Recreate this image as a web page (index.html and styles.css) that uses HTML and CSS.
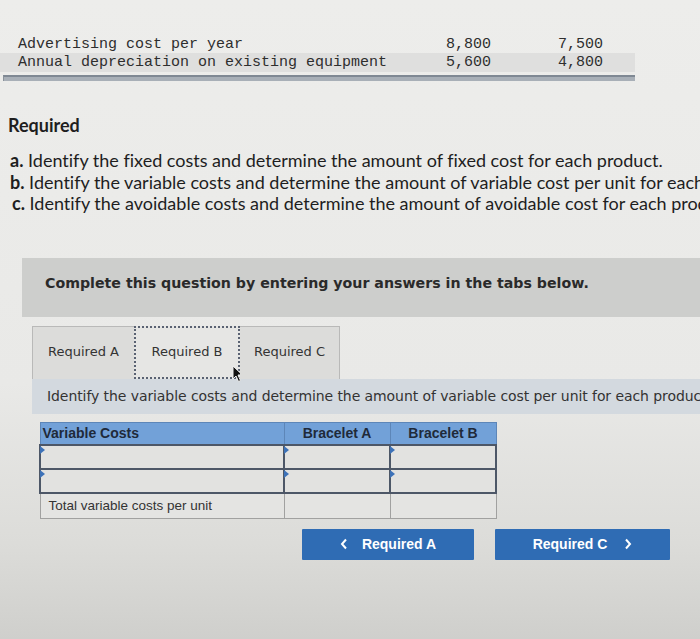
FILE: index.html
```html
<!DOCTYPE html>
<html>
<head>
<meta charset="utf-8">
<link rel="stylesheet" href="styles.css">
</head>
<body>
<div class="page">
  <div class="data">
    <div class="drow">
      <span class="dlabel">Advertising cost per year</span>
      <span class="dnum">8,800</span>
      <span class="dnum">7,500</span>
    </div>
    <div class="drow alt">
      <span class="dlabel">Annual depreciation on existing equipment</span>
      <span class="dnum">5,600</span>
      <span class="dnum">4,800</span>
    </div>
  </div>
  <div class="rule"></div>

  <h2 class="req-title">Required</h2>
  <ol class="req-list">
    <li><b>a.</b> Identify the fixed costs and determine the amount of fixed cost for each product.</li>
    <li><b>b.</b> Identify the variable costs and determine the amount of variable cost per unit for each product.</li>
    <li class="c"><b>c.</b> Identify the avoidable costs and determine the amount of avoidable cost for each product.</li>
  </ol>

  <div class="notice">Complete this question by entering your answers in the tabs below.</div>

  <div class="tabs">
    <div class="tab">Required A</div>
    <div class="tab active">Required B<svg class="cursor" width="12" height="18" viewBox="0 0 12 18"><path d="M1 1 L1 14 L4 11 L6.5 16.5 L8.5 15.5 L6 10 L10.5 10 Z" fill="#111" stroke="#eee" stroke-width="1"/></svg></div>
    <div class="tab">Required C</div>
  </div>
  <div class="panel">Identify the variable costs and determine the amount of variable cost per unit for each product.</div>

  <table class="grid">
    <thead>
      <tr><th class="first">Variable Costs</th><th>Bracelet A</th><th>Bracelet B</th></tr>
    </thead>
    <tbody>
      <tr class="input"><td><i class="flag"></i></td><td><i class="flag"></i></td><td><i class="flag"></i></td></tr>
      <tr class="input"><td><i class="flag"></i></td><td><i class="flag"></i></td><td><i class="flag"></i></td></tr>
      <tr class="total"><td>Total variable costs per unit</td><td></td><td></td></tr>
    </tbody>
  </table>

  <div class="nav">
    <div class="btn prev"><svg class="chev" width="8" height="12" viewBox="0 0 8 12"><path d="M6 1.5 L2 6 L6 10.5" fill="none" stroke="#fff" stroke-width="2"/></svg>Required A</div>
    <div class="btn next">Required C<svg class="chev" width="8" height="12" viewBox="0 0 8 12"><path d="M2 1.5 L6 6 L2 10.5" fill="none" stroke="#fff" stroke-width="2"/></svg></div>
  </div>
</div>
</body>
</html>
```

FILE: styles.css
```css
* { box-sizing: border-box; }
html, body { margin: 0; padding: 0; }
body {
  width: 700px;
  height: 639px;
  overflow: hidden;
  background: linear-gradient(to bottom, #ededeb 0%, #e9e9e7 60%, #dcdcd9 85%, #cfcfcc 100%);
  color: #222;
}
.page { padding-top: 37px; }

.data { width: 635px; font-family: "Liberation Mono", monospace; font-size: 15px; color: #2e2e2e; }
.drow { display: flex; height: 16px; line-height: 16px; padding-left: 18px; }
.drow.alt { background: #dfdfde; height: 19px; line-height: 19px; padding-top: 0; }
.dlabel { width: 428px; white-space: nowrap; }
.dnum { text-align: right; }
.dnum:nth-child(2) { width: 45px; }
.dnum:nth-child(3) { width: 112px; }

.rule {
  margin: 3px 0 0 3px;
  width: 632px;
  height: 6px;
  background: #a8afb7;
  border-top: 2px solid #7f8893;
  border-left: 1px solid #8a929b;
}

.req-title {
  margin: 33px 0 0 8px;
  font-family: Lato, "Open Sans", sans-serif;
  font-weight: 700;
  font-size: 18px;
  line-height: 22px;
  color: #1e1e1e;
}
.req-list {
  list-style: none;
  margin: 14px 0 0 0;
  padding: 0 0 0 10px;
  font-family: Lato, "Open Sans", sans-serif;
  font-variant-ligatures: none;
  font-size: 18px;
  line-height: 21.5px;
  color: #1e1e1e;
  white-space: nowrap;
  overflow: hidden;
}
.req-list li.c { padding-left: 2px; }

.notice {
  margin: 43px 0 0 22px;
  height: 59px;
  padding: 17px 0 0 23px;
  background: #cdcecc;
  font-family: "DejaVu Sans", Verdana, sans-serif;
  font-weight: 700;
  font-size: 14.2px;
  line-height: 16px;
  color: #2a2a2a;
}

.tabs {
  display: flex;
  margin: 9px 0 0 32px;
  height: 53px;
}
.tab {
  position: relative;
  width: 102px;
  height: 53px;
  display: flex;
  align-items: center;
  justify-content: center;
  padding-bottom: 2px;
  font-family: "DejaVu Sans", Verdana, sans-serif;
  font-size: 13px;
  color: #333;
  background: #dcdcda;
  border: 1px solid #b9b9b8;
  border-bottom: none;
}
.tab.active {
  width: 106px;
  background: #e6e6e4;
  border: 2px dotted #5a6272;
}
.tab:last-child { width: 100px; border-left: none; }
.tab:first-child { border-right: none; }
.cursor { position: absolute; right: -6px; bottom: -6px; }

.panel {
  margin-left: 32px;
  height: 35px;
  line-height: 34px;
  padding-left: 15px;
  background: #d3d9df;
  font-family: "DejaVu Sans", Verdana, sans-serif;
  font-size: 14px;
  letter-spacing: -0.08px;
  color: #333;
  white-space: nowrap;
  overflow: hidden;
}

.grid {
  margin: 8px 0 0 39px;
  border-collapse: collapse;
  font-family: "Liberation Sans", Arial, sans-serif;
  table-layout: fixed;
  width: 456px;
}
.grid th {
  height: 23px;
  background: #72a1d8;
  color: #1f2a3a;
  font-size: 14px;
  font-weight: 700;
  text-align: center;
  border: 1px solid #5d86b8;
  padding: 0;
}
.grid th.first { width: 244px; text-align: left; padding-left: 2px; }
.grid th:nth-child(2), .grid th:nth-child(3) { width: 106px; }
.grid td {
  height: 24px;
  padding: 0;
  position: relative;
  background: #e2e2e0;
}
.grid tr.input td { border: 2px solid #4d5767; }
.grid tr.total td {
  height: 25px;
  border: 1px solid #a1a1a0;
  font-size: 13.5px;
  color: #333;
  padding-left: 8px;
  background: #e4e4e2;
}
.flag {
  position: absolute;
  left: -1px;
  top: 0;
  width: 0;
  height: 0;
  border-top: 4px solid transparent;
  border-bottom: 4px solid transparent;
  border-left: 5px solid #3d72b8;
}

.nav {
  display: flex;
  margin: 10px 0 0 302px;
  gap: 21px;
}
.btn {
  height: 31px;
  display: flex;
  align-items: center;
  justify-content: center;
  background: #2f6cb4;
  color: #fff;
  font-family: "Liberation Sans", Arial, sans-serif;
  font-weight: 700;
  font-size: 14px;
  border-radius: 1px;
}
.btn.prev { width: 172px; }
.btn.next { width: 175px; }
.btn.prev .chev { margin-right: 14px; }
.btn.next .chev { margin-left: 17px; }
```
